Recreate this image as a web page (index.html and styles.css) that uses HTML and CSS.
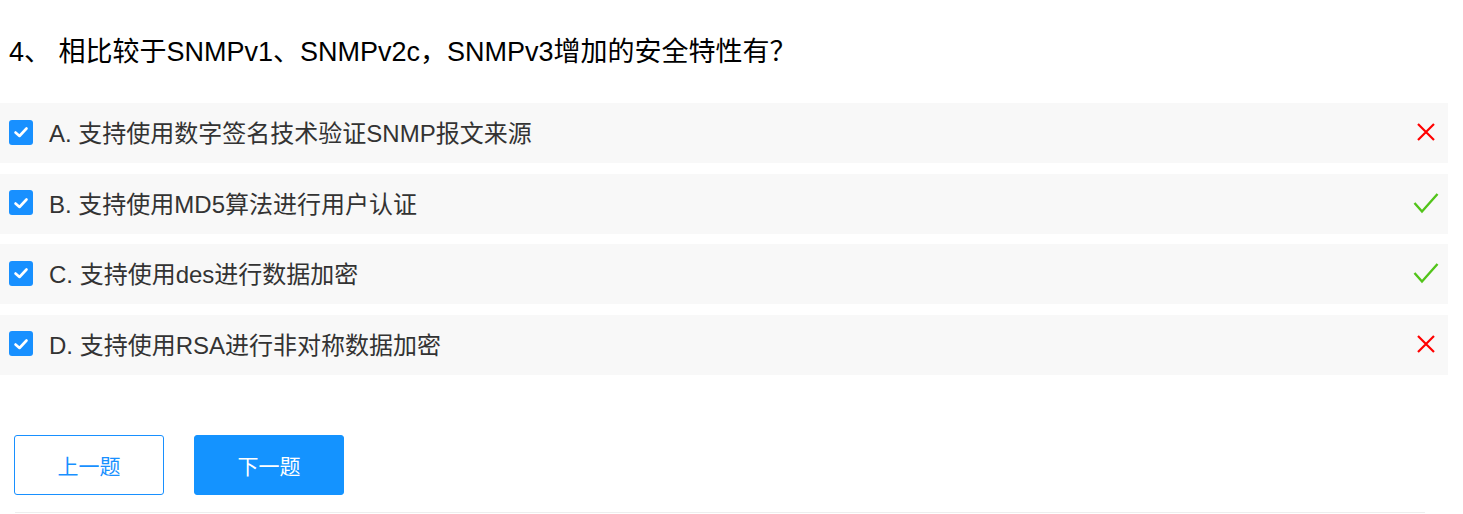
FILE: index.html
```html
<!DOCTYPE html>
<html lang="zh-CN">
<head>
<meta charset="utf-8">
<title>SNMPv3</title>
<link rel="stylesheet" href="styles.css">
</head>
<body>
<div class="page">
  <h2 class="question">4、 相比较于SNMPv1、SNMPv2c，SNMPv3增加的安全特性有？</h2>
  <ul class="options">
    <li class="option">
      <span class="check"><svg viewBox="0 0 24 24" width="24" height="24"><path d="M6.5 12.5 L10.5 16 L17.5 8.5" fill="none" stroke="#fff" stroke-width="2.6" stroke-linecap="round" stroke-linejoin="round"/></svg></span>
      <span class="label">A. 支持使用数字签名技术验证SNMP报文来源</span>
      <span class="mark wrong"><svg viewBox="0 0 20 20" width="20" height="20"><path d="M2 2 L18 18 M18 2 L2 18" stroke="#ff0000" stroke-width="2.2" fill="none"/></svg></span>
    </li>
    <li class="option">
      <span class="check"><svg viewBox="0 0 24 24" width="24" height="24"><path d="M6.5 12.5 L10.5 16 L17.5 8.5" fill="none" stroke="#fff" stroke-width="2.6" stroke-linecap="round" stroke-linejoin="round"/></svg></span>
      <span class="label">B. 支持使用MD5算法进行用户认证</span>
      <span class="mark right"><svg viewBox="0 0 26 22" width="26" height="22"><path d="M1.5 11 L9 19.5 L24.5 2" stroke="#52c41a" stroke-width="2.4" fill="none"/></svg></span>
    </li>
    <li class="option">
      <span class="check"><svg viewBox="0 0 24 24" width="24" height="24"><path d="M6.5 12.5 L10.5 16 L17.5 8.5" fill="none" stroke="#fff" stroke-width="2.6" stroke-linecap="round" stroke-linejoin="round"/></svg></span>
      <span class="label">C. 支持使用des进行数据加密</span>
      <span class="mark right"><svg viewBox="0 0 26 22" width="26" height="22"><path d="M1.5 11 L9 19.5 L24.5 2" stroke="#52c41a" stroke-width="2.4" fill="none"/></svg></span>
    </li>
    <li class="option">
      <span class="check"><svg viewBox="0 0 24 24" width="24" height="24"><path d="M6.5 12.5 L10.5 16 L17.5 8.5" fill="none" stroke="#fff" stroke-width="2.6" stroke-linecap="round" stroke-linejoin="round"/></svg></span>
      <span class="label">D. 支持使用RSA进行非对称数据加密</span>
      <span class="mark wrong"><svg viewBox="0 0 20 20" width="20" height="20"><path d="M2 2 L18 18 M18 2 L2 18" stroke="#ff0000" stroke-width="2.2" fill="none"/></svg></span>
    </li>
  </ul>
  <div class="actions">
    <button class="btn btn-outline">上一题</button>
    <button class="btn btn-primary">下一题</button>
  </div>
  <div class="divider"></div>
</div>
</body>
</html>
```

FILE: styles.css
```css
* { box-sizing: border-box; }
html, body { margin: 0; padding: 0; background: #fff; }
body {
  font-family: "Liberation Sans", Arial, "Noto Sans CJK SC", sans-serif;
  color: #333;
}
.page {
  width: 1448px;
  padding-top: 26px;
}
.question {
  margin: 0;
  padding-left: 9px;
  font-size: 27px;
  font-weight: normal;
  line-height: 52px;
  height: 52px;
  color: #000;
}
.options {
  list-style: none;
  margin: 25px 0 0;
  padding: 0;
  display: flex;
  flex-direction: column;
  gap: 10.67px;
}
.option {
  height: 60px;
  background: #f8f8f8;
  display: flex;
  align-items: center;
  padding-left: 9px;
  padding-right: 9px;
}
.check {
  width: 24px;
  height: 25px;
  margin-top: -2px;
  background: #1890ff;
  border-radius: 3px;
  display: flex;
  align-items: center;
  justify-content: center;
  flex: none;
}
.check svg { display: block; }
.label {
  margin-left: 16px;
  margin-top: -3px;
  font-size: 24px;
  color: #333;
  flex: 1;
}
.mark {
  display: flex;
  align-items: center;
  justify-content: center;
  width: 26px;
  height: 22px;
  margin-top: -2px;
}
.mark svg { display: block; }
.actions {
  display: flex;
  gap: 30px;
  padding-left: 14px;
  margin-top: 60px;
}
.btn {
  width: 150px;
  height: 60px;
  border-radius: 3px;
  font-family: "Liberation Sans", Arial, "Noto Sans CJK SC", sans-serif;
  font-size: 21px;
  cursor: pointer;
}
.btn-outline {
  background: #fff;
  border: 1px solid #1890ff;
  color: #1890ff;
}
.btn-primary {
  background: #1493ff;
  border: 1px solid #1493ff;
  color: #fff;
}
.divider {
  margin: 17px 0 0 15px;
  width: 1410px;
  height: 1px;
  background: #eeeeee;
}
```
